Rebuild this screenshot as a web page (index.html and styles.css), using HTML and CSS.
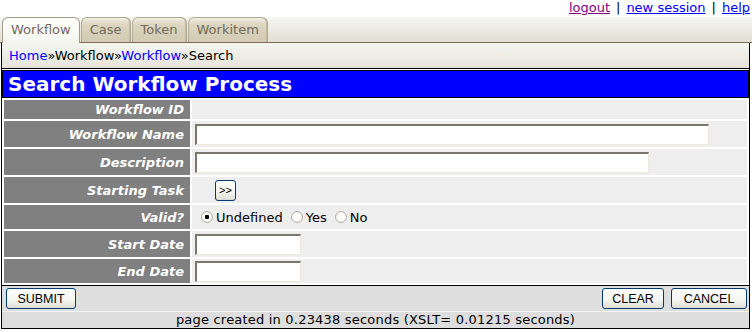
FILE: index.html
```html
<!DOCTYPE html>
<html lang="en">
<head>
  <meta charset="UTF-8" />
  <title>Search Workflow Process</title>
  <link rel="stylesheet" href="styles.css">
</head>
<body>
  <div class="toplinks">
    <a href="#" class="visited">logout</a><span class="sep">|</span><a href="#">new session</a><span class="sep">|</span><a href="#">help</a>
  </div>
  <ul class="tabs">
    <li class="tab active"><a href="#">Workflow</a></li>
    <li class="tab"><a href="#">Case</a></li>
    <li class="tab"><a href="#">Token</a></li>
    <li class="tab"><a href="#">Workitem</a></li>
  </ul>
  <div class="page">
    <div class="crumbs"><a href="#">Home</a>»Workflow»<a href="#">Workflow</a>»Search</div>
    <form class="search" id="search">
      <h1 class="title">Search Workflow Process</h1>
      <table class="fields">
        <tr class="short">
          <th>Workflow ID</th>
          <td></td>
        </tr>
        <tr>
          <th>Workflow Name</th>
          <td><input type="text" name="name" class="text wide" /></td>
        </tr>
        <tr>
          <th>Description</th>
          <td><input type="text" name="description" class="text medium" /></td>
        </tr>
        <tr>
          <th>Starting Task</th>
          <td><button type="button" class="btn pick">&gt;&gt;</button></td>
        </tr>
        <tr class="low">
          <th>Valid?</th>
          <td>
            <div class="opts">
              <label class="opt"><input type="radio" name="valid" value="" checked />Undefined</label>
              <label class="opt"><input type="radio" name="valid" value="yes" />Yes</label>
              <label class="opt"><input type="radio" name="valid" value="no" />No</label>
            </div>
          </td>
        </tr>
        <tr>
          <th>Start Date</th>
          <td><input type="text" name="start" class="text date" /></td>
        </tr>
        <tr class="low">
          <th>End Date</th>
          <td><input type="text" name="end" class="text date" /></td>
        </tr>
      </table>
      <div class="actions">
        <button type="submit" class="btn btn-submit">SUBMIT</button>
        <div class="actions-right">
          <button type="reset" class="btn btn-clear">CLEAR</button>
          <button type="button" class="btn btn-cancel">CANCEL</button>
        </div>
      </div>
    </form>
    <div class="footer">page created in 0.23438 seconds (XSLT= 0.01215 seconds)</div>
  </div>
</body>
</html>
```

FILE: styles.css
```css
body {
  margin: 0;
  font-family: "DejaVu Sans", Verdana, sans-serif;
  font-size: 13px;
  color: #000;
  background: #fff;
}

.toplinks {
  height: 17px;
  line-height: 15px;
  text-align: right;
  padding-right: 2px;
}
.toplinks a {
  color: #0000ff;
}
.toplinks a.visited {
  color: #800080;
}
.sep {
  margin: 0 6px;
}

.tabs {
  list-style: none;
  margin: 0;
  padding: 0 0 0 2px;
  display: flex;
  align-items: flex-start;
  gap: 1px;
  height: 25px;
  border-bottom: 1px solid #7b6b55;
  background: linear-gradient(#f6f6f2, #e9e8df 60%, #e2e0d4);
}
.tab {
  height: 25px;
  box-sizing: border-box;
  border: 1px solid #b3aa92;
  border-bottom: 0;
  border-radius: 6px 6px 0 0;
  background: linear-gradient(#f1eee3, #dbd4bf 30%, #d3cbb3);
  box-shadow: inset -1px 0 0 #c2b99f;
}
.tab a {
  display: block;
  padding: 0 8px;
  line-height: 24px;
  color: #75695a;
  text-decoration: none;
}
.tab.active {
  height: 26px;
  margin-bottom: -1px;
  border-color: #a59b82;
  background: linear-gradient(#fdfdfb, #f5f5f0);
  box-shadow: none;
}

.page {
  margin: 0 2px 0 1px;
  border: 1px solid #000;
  border-top: 0;
}

.crumbs {
  height: 25px;
  line-height: 25px;
  padding-left: 7px;
  border-bottom: 1px solid #000;
  background: linear-gradient(#f5f5f0, #eeeee7 50%, #e5e3d9);
}
.crumbs a {
  color: #0000ff;
  text-decoration: none;
}

.search {
  margin: 0;
}

.title {
  margin: 1px 0 0;
  height: 26px;
  line-height: 26px;
  padding-left: 5px;
  border: 1px solid #000;
  background: #0000ff;
  color: #fff;
  font-size: 20px;
  font-weight: bold;
}

.fields {
  width: 100%;
  border-spacing: 2px;
  background: #fff;
}
.fields th {
  width: 180px;
  height: 26px;
  padding: 0 6px 0 0;
  background: #808080;
  color: #fff;
  font-weight: bold;
  font-style: italic;
  text-align: right;
}
.fields td {
  padding: 0 3px;
  background: #eeeeee;
}
.fields tr.short th {
  height: 19px;
}
.fields tr.low th {
  height: 24px;
}

.text {
  display: block;
  height: 21px;
  box-sizing: border-box;
  padding: 0 2px;
  border-style: solid;
  border-width: 2px 1px 1px 2px;
  border-color: #7c776c #ece9d8 #ece9d8 #7c776c;
  background: #fff;
  font-family: "DejaVu Sans", Verdana, sans-serif;
  font-size: 13px;
}
.wide {
  width: 514px;
}
.medium {
  width: 454px;
}
.date {
  width: 106px;
}

.btn {
  height: 21px;
  padding: 0;
  border: 1px solid #003c74;
  border-radius: 3px;
  background: linear-gradient(#ffffff, #f4f4f0 60%, #e0ddd3);
  color: #000;
  font-family: "Liberation Sans", Arial, sans-serif;
  font-size: 12.5px;
  cursor: pointer;
}
.pick {
  display: block;
  width: 21px;
  margin-left: 20px;
  font-size: 11px;
}

.opts {
  display: flex;
  align-items: center;
  gap: 8px;
  padding-left: 6px;
}
.opt {
  display: flex;
  align-items: center;
  gap: 3px;
}
.opt input {
  appearance: none;
  width: 12px;
  height: 12px;
  margin: 0;
  border: 1px solid #b4b2a6;
  border-radius: 50%;
  background: radial-gradient(circle, #ffffff 40%, #e9e8e0);
}
.opt input:checked {
  background: radial-gradient(circle, #000 0 2px, #ffffff 2.5px 40%, #e9e8e0);
}

.actions {
  display: flex;
  justify-content: space-between;
  align-items: center;
  height: 25px;
  padding: 0 2px 0 4px;
  border-top: 1px solid #000;
  background: #dedede;
}
.actions-right {
  display: flex;
  gap: 7px;
}
.btn-submit {
  width: 70px;
}
.btn-clear {
  width: 62px;
}
.btn-cancel {
  width: 76px;
}

.footer {
  height: 16px;
  line-height: 16px;
  text-align: center;
  letter-spacing: 0.2px;
  border-top: 1px solid #f3f3f3;
  background: #dedede;
}
```
